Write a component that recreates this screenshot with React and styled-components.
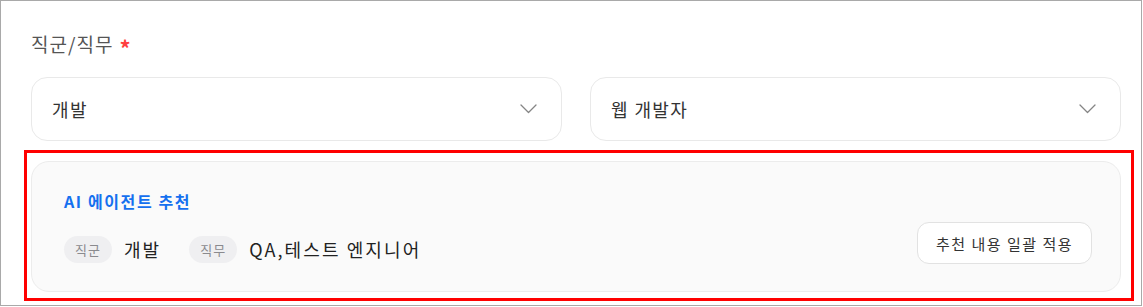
import React from "react";
import styled, { createGlobalStyle } from "styled-components";

const Global = createGlobalStyle`
  html, body { margin: 0; padding: 0; background: #fff; }
  body { font-family: "Noto Sans CJK KR", "Noto Sans", sans-serif; }
  * { box-sizing: border-box; }
`;

const Frame = styled.div`
  width: 1142px;
  height: 306px;
  border: 1px solid #a9a9a9;
  padding: 29px 20px 0 30px;
  display: flex;
  flex-direction: column;
`;

const Label = styled.div`
  display: flex;
  align-items: center;
  gap: 6px;
  font-size: 19px;
  line-height: 28px;
  color: #555;
  letter-spacing: 1px;
`;

const Star = styled.span`
  color: #ff4040;
  font-size: 22px;
  font-weight: 700;
  line-height: 1;
  margin-top: 6px;
`;

const SelectRow = styled.div`
  display: grid;
  grid-template-columns: 1fr 1fr;
  gap: 28px;
  margin-top: 19px;
`;

const Select = styled.div`
  height: 64px;
  border: 1px solid #e9e9e9;
  border-radius: 16px;
  background: #fff;
  display: flex;
  align-items: center;
  justify-content: space-between;
  padding: 0 24px 0 20px;
  font-size: 18px;
  letter-spacing: 1.4px;
  color: #333;
`;

const Chevron = () => (
  <svg width="17" height="10" viewBox="0 0 17 10" fill="none">
    <path d="M1 1l7.5 7.5L16 1" stroke="#858585" strokeWidth="1.3" strokeLinecap="round" strokeLinejoin="round" />
  </svg>
);

const Card = styled.div`
  position: relative;
  margin-top: 20px;
  border: 1px solid #ececec;
  border-radius: 18px;
  background: #fafafa;
  padding: 27px 28px 27px 32px;
  display: flex;
  justify-content: space-between;
  align-items: flex-end;
`;

const Highlight = styled.div`
  position: absolute;
  top: -12px;
  left: -8px;
  right: -14px;
  bottom: -10px;
  border: 3px solid #ff0000;
  pointer-events: none;
`;

const Info = styled.div`
  display: flex;
  flex-direction: column;
  gap: 21px;
`;

const Title = styled.div`
  font-size: 16px;
  font-weight: 700;
  line-height: 24px;
  letter-spacing: 1.6px;
  color: #1570ef;
`;

const Pairs = styled.div`
  display: flex;
  align-items: center;
  height: 30px;
  gap: 28px;
`;

const Pair = styled.div`
  display: flex;
  align-items: center;
  gap: 12px;
`;

const Chip = styled.span`
  height: 27px;
  padding: 0 11px;
  border-radius: 14px;
  background: #efeff1;
  color: #8a8a8e;
  font-size: 13px;
  letter-spacing: 1px;
  display: inline-flex;
  align-items: center;
`;

const Value = styled.span`
  font-size: 18px;
  color: #222;
  line-height: 30px;
  letter-spacing: 2.1px;
`;

const ApplyButton = styled.button`
  height: 42px;
  padding: 0 18px;
  border: 1px solid #e2e2e2;
  border-radius: 12px;
  background: #fff;
  font-family: inherit;
  font-size: 15px;
  letter-spacing: 1.5px;
  color: #333;
  cursor: pointer;
`;

export default function App() {
  return (
    <>
      <Global />
      <Frame>
        <Label>
          직군/직무 <Star>*</Star>
        </Label>
        <SelectRow>
          <Select>
            <span>개발</span>
            <Chevron />
          </Select>
          <Select>
            <span>웹 개발자</span>
            <Chevron />
          </Select>
        </SelectRow>
        <Card>
          <Highlight />
          <Info>
            <Title>AI 에이전트 추천</Title>
            <Pairs>
              <Pair>
                <Chip>직군</Chip>
                <Value>개발</Value>
              </Pair>
              <Pair>
                <Chip>직무</Chip>
                <Value>QA,테스트 엔지니어</Value>
              </Pair>
            </Pairs>
          </Info>
          <ApplyButton>추천 내용 일괄 적용</ApplyButton>
        </Card>
      </Frame>
    </>
  );
}
